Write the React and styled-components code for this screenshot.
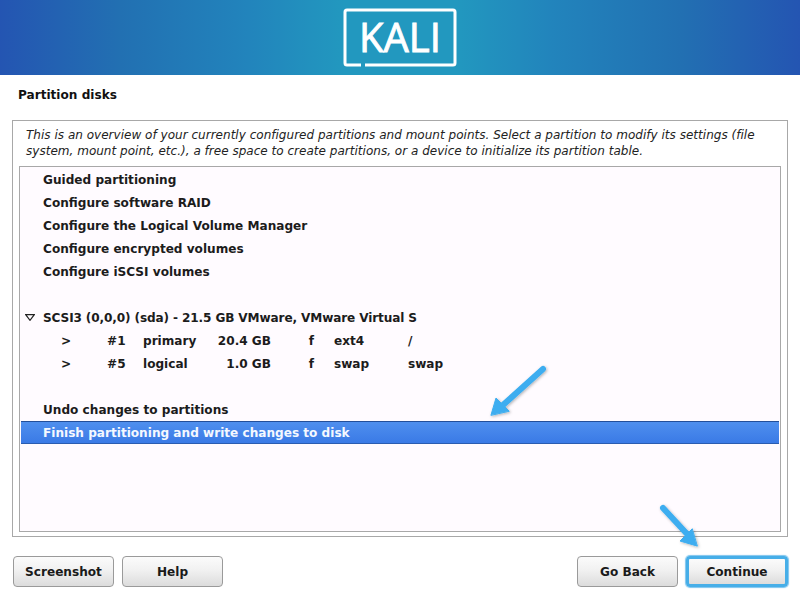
import React from "react";
import styled, { createGlobalStyle } from "styled-components";

const Global = createGlobalStyle`
  html, body { margin: 0; padding: 0; background: #fff; }
  #root { width: 800px; height: 600px; overflow: hidden; }
`;
const Page = styled.div`
  position: relative; width: 800px; height: 600px; display: flex; flex-direction: column;
  font-family: "DejaVu Sans", sans-serif; color: #111; background: #fff; overflow: hidden;
`;
const Banner = styled.header`
  height: 75px; flex: none; display: flex; justify-content: center; align-items: flex-start; padding-top: 9px; box-sizing: border-box;
  background: linear-gradient(90deg, #2455b2 0%, #2270b2 15%, #2284bc 31%, #2298bf 43%, #2298bf 57%, #2284bc 69%, #2270b2 85%, #2455b2 100%);
`;
const Logo = styled.svg`width: 112px; height: 58px; display: block; overflow: visible;`;
const LogoText = styled.text`font-family: "Open Sans", "Liberation Sans", sans-serif; font-size: 40px; fill: #fff; stroke: #fff; stroke-width: .9px;`;
const Title = styled.h1`
  margin: 0; height: 45px; box-sizing: border-box; padding: 13px 0 0 18px; font-size: 12.1px; line-height: 15px; font-weight: 700; flex: none;
`;
const Frame = styled.section`
  margin: 0 12px; height: 417px; box-sizing: border-box; border: 1px solid #a8a8a8; padding: 6px 6px 4px 6px; display: flex; flex-direction: column; flex: none;
`;
const Intro = styled.p`
  margin: 0 0 7px 7px; font-size: 12px; line-height: 16px; font-style: oblique; color: #222; height: 32px; flex: none; letter-spacing: .02px;
`;
const List = styled.ul`
  margin: 0; padding: 1px; list-style: none; flex: 1; border: 1px solid #a8a8a8; background: #fffbff;
`;
const Row = styled.li`
  height: 23px; box-sizing: border-box; display: flex; align-items: center; padding: 2px 0 0 ${p => p.$indent || 22}px;
  font-size: 12.1px; font-weight: 700; line-height: 21px; white-space: pre; color: #1c1c1c; position: relative;
  ${p => p.$tight && `letter-spacing: -.13px;`}
  ${p => p.$selected && `
    background: linear-gradient(180deg, #4f8fee 0%, #3a7ae6 100%);
    color: #f4f8ff; border-top: 1px solid #234f9a; border-bottom: 1px solid #2a5cb0;
  `}
`;
const Cell = styled.span`
  display: inline-block; width: ${p => p.$w}px; text-align: ${p => p.$right ? "right" : "left"}; flex: none;
`;
const Caret = styled.svg`position: absolute; left: 4px; top: 8px; width: 10px; height: 7px;`;
const Footer = styled.footer`
  flex: 1; display: flex; align-items: flex-start; padding: 19px 12px 0 13px; gap: 8px;
`;
const Spacer = styled.div`flex: 1;`;
const Button = styled.button`
  width: ${p => p.$primary ? 102 : 101}px; height: 31px; box-sizing: border-box; padding: 0; border: 1px solid #9a9a9a; border-radius: 4px; margin: 0;
  background: linear-gradient(180deg, #fbfbfb 0%, #f1f1f1 45%, #dcdcdc 100%);
  font-family: "DejaVu Sans", sans-serif; font-size: 12.1px; font-weight: 700; color: #1a1a1a;
  ${p => p.$primary && `
    border: 3px solid #46aee8; box-shadow: 0 0 1px 1px #7cc4ee;
  `}
`;
const Arrow = styled.svg`position: absolute; overflow: visible; left: 0; top: 0; width: 800px; height: 600px; pointer-events: none;`;

const partitions = [
  ["#1", "primary", "20.4 GB", "f", "ext4", "/"],
  ["#5", "logical", "1.0 GB", "f", "swap", "swap"],
];

export default function App() {
  return (
    <Page>
      <Global />
      <Banner>
        <Logo viewBox="0 0 112 58">
          <path d="M17 56H3a2 2 0 0 1-2-2V3a2 2 0 0 1 2-2h106a2 2 0 0 1 2 2v51a2 2 0 0 1-2 2H21" fill="none" stroke="#fff" strokeWidth="3" />
          <LogoText x="15" y="43">KALI</LogoText>
        </Logo>
      </Banner>
      <Title>Partition disks</Title>
      <Frame>
        <Intro>
          This is an overview of your currently configured partitions and mount points. Select a partition to modify its settings (file system, mount point, etc.), a free space to create partitions, or a device to initialize its partition table.
        </Intro>
        <List>
          <Row>Guided partitioning</Row>
          <Row>Configure software RAID</Row>
          <Row>Configure the Logical Volume Manager</Row>
          <Row>Configure encrypted volumes</Row>
          <Row>Configure iSCSI volumes</Row>
          <Row />
          <Row $tight>
            <Caret viewBox="0 0 10 7"><path d="M.7.7h8.600L5 6.300z" fill="none" stroke="#222" strokeWidth="1.200" /></Caret>
            SCSI3 (0,0,0) (sda) - 21.5 GB VMware, VMware Virtual S
          </Row>
          {partitions.map(p => (
            <Row key={p[0]} $indent={40}>
              <Cell $w={46}>&gt;</Cell>
              <Cell $w={36}>{p[0]}</Cell>
              <Cell $w={60}>{p[1]}</Cell>
              <Cell $w={68} $right>{p[2]}</Cell>
              <Cell $w={43} $right>{p[3]}</Cell>
              <Cell $w={20} />
              <Cell $w={74}>{p[4]}</Cell>
              <Cell $w={50}>{p[5]}</Cell>
            </Row>
          ))}
          <Row />
          <Row>Undo changes to partitions</Row>
          <Row $selected>Finish partitioning and write changes to disk</Row>
        </List>
      </Frame>
      <Footer>
        <Button>Screenshot</Button>
        <Button>Help</Button>
        <Spacer />
        <Button>Go Back</Button>
        <Button $primary>Continue</Button>
      </Footer>
      <Arrow viewBox="0 0 800 600">
        <defs>
          <filter id="s" x="-30%" y="-30%" width="160%" height="160%">
            <feDropShadow dx="1" dy="1" stdDeviation="1.500" floodColor="#000" floodOpacity=".3" />
          </filter>
        </defs>
        <g filter="url(#s)" fill="#3cadf0" stroke="#3cadf0" strokeLinecap="round" strokeLinejoin="round">
          <path d="M543 369 503 405" fill="none" strokeWidth="6" />
          <path d="M491 415 496 398 509 411z" strokeWidth="1" />
          <path d="M663 508 688 535" fill="none" strokeWidth="6" />
          <path d="M697 546 680 541 692 529z" strokeWidth="1" />
        </g>
      </Arrow>
    </Page>
  );
}
